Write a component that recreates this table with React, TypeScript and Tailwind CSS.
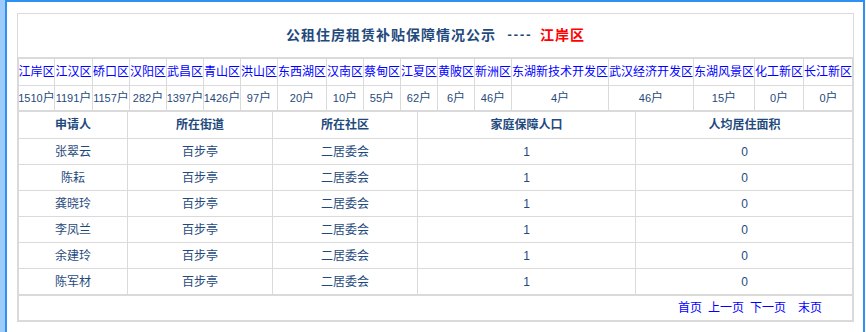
const districts = [
  ['江岸区', 1510],
  ['江汉区', 1191],
  ['硚口区', 1157],
  ['汉阳区', 282],
  ['武昌区', 1397],
  ['青山区', 1426],
  ['洪山区', 97],
  ['东西湖区', 20],
  ['汉南区', 10],
  ['蔡甸区', 55],
  ['江夏区', 62],
  ['黄陂区', 6],
  ['新洲区', 46],
  ['东湖新技术开发区', 4],
  ['武汉经济开发区', 46],
  ['东湖风景区', 15],
  ['化工新区', 0],
  ['长江新区', 0],
] as const

const applicants = ['张翠云', '陈耘', '龚晓玲', '李凤兰', '余建玲', '陈军材']

const headers = ['申请人', '所在街道', '所在社区', '家庭保障人口', '人均居住面积']

export default function App() {
  return (
    <div className="flex h-[332px] w-[866px] bg-white font-['Liberation_Sans','Noto_Sans_CJK_SC',sans-serif] text-[12px] text-[#1f4a7d]">
      <div className="w-[5px] bg-[#9ccbfc]" />
      <div className="w-[860px] border-l-2 border-r-2 border-t-2 border-[#2f8ff2] pl-[10px] pr-[9px] pt-[11px]">
        <div className="w-[837px] border border-[#dadada]">
          {/* title */}
          <div className="flex h-[44px] items-center justify-center border-b border-[#dadada] text-[14px] font-bold">
            <span className="tracking-[1px]">公租住房租赁补贴保障情况公示</span>
            <span className="ml-[10px] font-['Liberation_Mono',monospace] text-[12px] tracking-[-1px]">----</span>
            <span className="ml-[9px] tracking-[1px] text-[#ff0000]">江岸区</span>
          </div>

          {/* district counts */}
          <div className="grid grid-cols-[36px_38px_37px_37px_37px_37px_37px_49px_37px_37px_37px_37px_37px_97px_85px_61px_49px_49px] border-l border-r border-t border-[#dadada]">
            {districts.map(([name]) => (
              <div
                key={name}
                className="flex h-[27px] items-center justify-center whitespace-nowrap border-b border-r border-[#dadada] text-[#0000ff] last:border-r-0"
              >
                {name}
              </div>
            ))}
            {districts.map(([name, n]) => (
              <div
                key={name + 'n'}
                className="flex h-[25px] items-center justify-center whitespace-nowrap border-b border-r border-[#dadada] last:border-r-0"
              >
                <span className="text-[11px]">{n}</span>户
              </div>
            ))}
          </div>

          {/* applicants */}
          <div className="grid grid-cols-[109px_145px_145px_218px_217px] border-l border-r border-t border-[#dadada]">
            {headers.map((h, i) => (
              <div
                key={h}
                className={`flex h-[27px] items-center justify-center border-b border-[#dadada] font-bold ${i < 4 ? 'border-r' : ''}`}
              >
                {h}
              </div>
            ))}
            {applicants.map((name) => (
              <div key={name} className="contents">
                <div className="flex h-[26px] items-center justify-center border-b border-r border-[#dadada]">{name}</div>
                <div className="flex h-[26px] items-center justify-center border-b border-r border-[#dadada]">百步亭</div>
                <div className="flex h-[26px] items-center justify-center border-b border-r border-[#dadada]">二居委会</div>
                <div className="flex h-[26px] items-center justify-center border-b border-r border-[#dadada]">1</div>
                <div className="flex h-[26px] items-center justify-center border-b border-[#dadada]">0</div>
              </div>
            ))}
          </div>

          {/* pager */}
          <div className="flex h-[26px] items-center justify-end border border-[#dadada] pr-[30px] text-[#0000ff]">
            <a>首页</a>
            <a className="ml-[6px]">上一页</a>
            <a className="ml-[6px]">下一页</a>
            <a className="ml-[12px]">末页</a>
          </div>
        </div>
      </div>
    </div>
  )
}
